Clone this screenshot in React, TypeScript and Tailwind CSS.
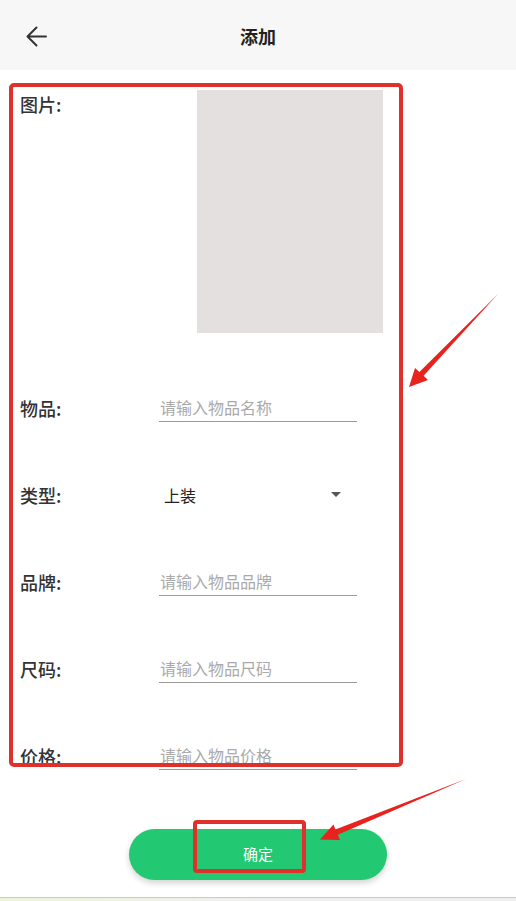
import React from "react";

const font = { fontFamily: '"Noto Sans CJK SC", "Noto Sans", sans-serif' };

function Row({ label, children }: { label: string; children: React.ReactNode }) {
  return (
    <div className="h-[87px] flex items-center">
      <div className="w-[139px] text-[18px] leading-none font-medium text-[#333]">{label}</div>
      {children}
    </div>
  );
}

function Field({ placeholder }: { placeholder: string }) {
  return (
    <input
      placeholder={placeholder}
      className="w-[198px] h-[28px] border-b border-[#9a9a9a] text-[16px] text-[#333] placeholder:text-[#aaaaaa] outline-none pl-[1px] bg-transparent"
      style={font}
    />
  );
}

export default function App() {
  return (
    <div className="relative w-[516px] h-[901px] overflow-hidden bg-white flex flex-col" style={font}>
      <header className="h-[70px] shrink-0 bg-[#f6f7f6] flex items-center pl-[26px] pr-[26px]">
        <div className="w-[21px] h-[21px] mt-[2px]">
          <svg width="21" height="21" viewBox="0 0 21 21" fill="none" stroke="#333" strokeWidth="2" strokeLinecap="round" strokeLinejoin="round">
            <path d="M20 10.5H1.5M10.5 1.5L1.5 10.5l9 9" />
          </svg>
        </div>
        <div className="flex-1 text-center text-[18px] font-bold text-[#222] mt-[2px]">添加</div>
        <div className="w-[21px]" />
      </header>

      <main className="px-[20px] pt-[20px]">
        <div className="flex">
          <div className="w-[177px] pt-[5px] text-[18px] leading-none font-medium text-[#333]">图片:</div>
          <div className="w-[186px] h-[243px] bg-[#e5e0e0]" />
        </div>
        <div className="mt-[31px]">
          <Row label="物品:">
            <Field placeholder="请输入物品名称" />
          </Row>
          <Row label="类型:">
            <div className="w-[198px] h-[28px] flex items-center justify-between pl-[5px] pr-[16px]">
              <span className="text-[16px] text-[#222]">上装</span>
              <svg width="10" height="5" viewBox="0 0 10 5">
                <path d="M0 0h10L5 5z" fill="#555" />
              </svg>
            </div>
          </Row>
          <Row label="品牌:">
            <Field placeholder="请输入物品品牌" />
          </Row>
          <Row label="尺码:">
            <Field placeholder="请输入物品尺码" />
          </Row>
          <Row label="价格:">
            <Field placeholder="请输入物品价格" />
          </Row>
        </div>
        <div className="flex justify-center mt-[30px]">
          <button className="w-[258px] h-[51px] rounded-full bg-[#22c872] text-white text-[15px] shadow-[0_3px_6px_rgba(0,0,0,0.18)]">
            确定
          </button>
        </div>
      </main>

      <div className="mt-auto h-[4px] border-t border-[#c8c8c8] bg-gradient-to-r from-[#eef5d6] via-[#f0f0f0] to-[#f0f0f0]" />

      {/* annotation overlays */}
      <div className="absolute left-[9px] top-[83px] w-[394px] h-[684px] border-[4px] border-[#e0302b] rounded-[5px] pointer-events-none" />
      <div className="absolute left-[193px] top-[820px] w-[113px] h-[53px] border-[4px] border-[#e0302b] rounded-[4px] pointer-events-none" />
      <svg className="absolute left-0 top-0 pointer-events-none" width="516" height="901" viewBox="0 0 516 901">
        <polygon
          points="498,294 423.6,375.8 428,380 409,387 415,368 419.4,372"
          fill="#e8221c"
        />
        <polygon
          points="466,779 337.8,834.8 340,840 320,839.5 333.5,824.5 335.4,829.4"
          fill="#e8221c"
        />
      </svg>
    </div>
  );
}
